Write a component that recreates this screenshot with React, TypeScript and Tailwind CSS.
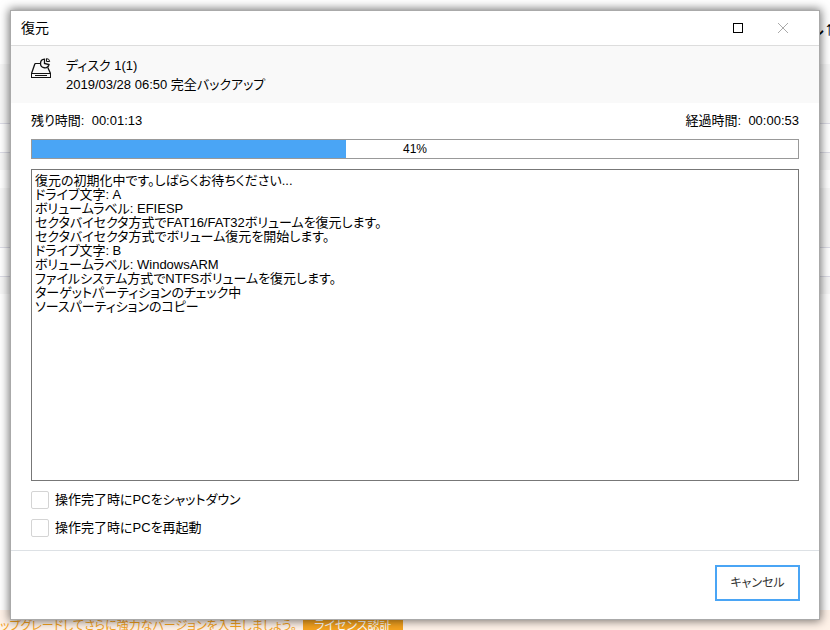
import { useState } from 'react';

interface RestoreJob {
  source: string;
  backup: string;
  remaining: string;
  elapsed: string;
  percent: number;
  log: string[];
}

const job: RestoreJob = {
  source: 'ディスク 1(1)',
  backup: '2019/03/28 06:50 完全バックアップ',
  remaining: '00:01:13',
  elapsed: '00:00:53',
  percent: 41,
  log: [
    '復元の初期化中です。しばらくお待ちください...',
    'ドライブ文字: A',
    'ボリュームラベル: EFIESP',
    'セクタバイセクタ方式でFAT16/FAT32ボリュームを復元します。',
    'セクタバイセクタ方式でボリューム復元を開始します。',
    'ドライブ文字: B',
    'ボリュームラベル: WindowsARM',
    'ファイルシステム方式でNTFSボリュームを復元します。',
    'ターゲットパーティションのチェック中',
    'ソースパーティションのコピー',
  ],
};

function DiskIcon() {
  return (
    <svg width="20" height="20" viewBox="0 0 20 20" fill="none" stroke="#111" aria-hidden="true">
      <g shapeRendering="crispEdges">
        <rect x="0.5" y="15.5" width="19" height="4" />
        <path d="M4 17.5h12M4 5.5h5" />
      </g>
      <path d="M0.5 15.5L4 5.5M16.8 9.5L19.5 15.5" strokeWidth="1.3" />
      <path d="M13.5 1.2A4.3 4.3 0 1 0 18 6.5L13.5 5.5Z" strokeWidth="1.3" />
      <path d="M15.5 0.6V3.5H18.7A3.2 3.2 0 0 0 15.5 0.6Z" />
    </svg>
  );
}

// Main window that stays visible behind the dialog
function Backdrop() {
  return (
    <div className="absolute inset-0 flex flex-col overflow-hidden bg-white text-xs" aria-hidden="true">
      <div className="flex h-16 shrink-0 justify-end pt-4">
        <span className="-mr-1 whitespace-nowrap text-xl leading-6">し↑</span>
      </div>
      <div className="h-[106px] shrink-0 bg-[#f7f7f7] pt-[59px]">
        <div className="h-[30px] border-y border-[#dcdce6] bg-white" />
      </div>
      <div className="mt-[18px] h-[106px] shrink-0 bg-[#f7f7f7] pt-[59px]">
        <div className="h-[30px] border-y border-[#dcdce6] bg-white" />
      </div>
      <div className="mt-auto flex h-5 items-start bg-[#fff2e8] text-[#f5a31f]">
        <span className="mt-2 whitespace-nowrap leading-4">ップグレードしてさらに強力なバージョンを入手しましょう。</span>
        <span className="ml-1.5 h-5 w-[100px] bg-[#f5a31f] pt-2 text-center leading-4 text-white">ライセンス認証</span>
      </div>
    </div>
  );
}

function Option({ id, label }: { id: string; label: string }) {
  const [checked, setChecked] = useState(false);

  return (
    <div className="flex h-[18px] items-center gap-1.5">
      <input
        id={id}
        type="checkbox"
        checked={checked}
        onChange={(e) => setChecked(e.target.checked)}
        className="size-[18px] appearance-none rounded-xs border border-[#d4d4d4] bg-white checked:bg-[#4aa5f5]"
      />
      <label htmlFor={id}>{label}</label>
    </div>
  );
}

export default function App() {
  return (
    <div className="relative flex min-h-screen flex-col p-[10px] font-['Liberation_Sans','Noto_Sans_CJK_JP',sans-serif] text-[13px] leading-[18px] text-black [font-feature-settings:'palt']">
      <Backdrop />

      <div
        role="dialog"
        aria-labelledby="dialog-title"
        className="relative flex grow flex-col border border-[#aaaaaa] bg-white shadow-[0_0_9px_1px_rgba(0,0,0,0.55)]"
      >
        <header className="flex h-[35px] items-center border-b border-[#dddddd] pl-[10px] pr-[31px]">
          <h1 id="dialog-title" className="grow text-sm">復元</h1>
          <button type="button" aria-label="最大化" className="mr-[35px]">
            <svg width="10" height="10" viewBox="0 0 10 10" fill="none" stroke="#000" shapeRendering="crispEdges">
              <rect x="0.5" y="0.5" width="9" height="9" />
            </svg>
          </button>
          <button type="button" aria-label="閉じる">
            <svg width="10" height="10" viewBox="0 0 10 10" stroke="#aaaaaa">
              <path d="M0 0L10 10M10 0L0 10" />
            </svg>
          </button>
        </header>

        <section className="flex h-[57px] gap-[15px] bg-[#f9f9f9] px-5 pt-[10px]">
          <div className="pt-0.5">
            <DiskIcon />
          </div>
          <div className="leading-[19px]">
            <p>{job.source}</p>
            <p>{job.backup}</p>
          </div>
        </section>

        <main className="flex grow flex-col px-5 pb-[13px]">
          <div className="flex justify-between py-[9px]">
            <span>残り時間:&nbsp; {job.remaining}</span>
            <span>経過時間:&nbsp; {job.elapsed}</span>
          </div>

          <div
            role="progressbar"
            aria-label="復元の進行状況"
            aria-valuenow={job.percent}
            aria-valuemin={0}
            aria-valuemax={100}
            className="relative h-5 border border-[#999999] bg-white"
          >
            <div className="h-full bg-[#4aa5f5]" style={{ width: `${job.percent}%` }} />
            <span className="absolute inset-0 text-center text-xs leading-[18px]">{job.percent}%</span>
          </div>

          <textarea
            readOnly
            aria-label="ログ"
            value={job.log.join('\n')}
            className="mt-[10px] grow resize-none border border-[#777777] px-[3px] py-1 leading-[14px] outline-none"
          />

          <div className="mt-[10px] flex flex-col gap-[10px]">
            <Option id="shutdown" label="操作完了時にPCをシャットダウン" />
            <Option id="reboot" label="操作完了時にPCを再起動" />
          </div>
        </main>

        <footer className="flex justify-end border-t border-[#dde1e5] px-[19px] pb-[18px] pt-[14px]">
          <button type="button" className="h-9 w-[85px] border-2 border-[#4aa5f5] bg-white text-xs text-[#333333]">
            キャンセル
          </button>
        </footer>
      </div>
    </div>
  );
}
